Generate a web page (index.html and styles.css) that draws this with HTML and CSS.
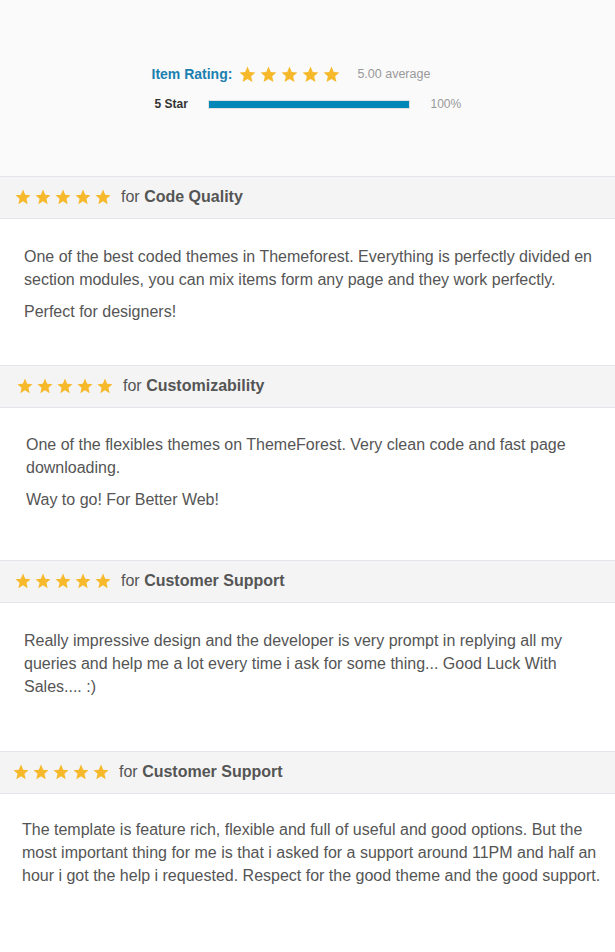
FILE: index.html
```html
<!DOCTYPE html>
<html>
<head>
<meta name="viewport" content="width=device-width, initial-scale=1">
<link rel="stylesheet" href="styles.css">
</head>
<body>

<svg class="defs" width="0" height="0">
  <symbol id="star" viewBox="0 0 24 24">
    <path d="M12 2l2.9 6.9 7.1.6-5.4 4.7 1.6 7.3L12 17.8 5.8 21.5l1.6-7.3L2 9.5l7.1-.6z"/>
  </symbol>
</svg>

<div class="summary">
  <div class="summary-inner">
    <div class="summary-row">
      <span class="summary-label">Item Rating:</span>
      <span class="stars stars-lg">
        <svg><use href="#star"/></svg><svg><use href="#star"/></svg><svg><use href="#star"/></svg><svg><use href="#star"/></svg><svg><use href="#star"/></svg>
      </span>
      <span class="summary-avg">5.00 average</span>
    </div>
    <div class="bar-row">
      <span class="bar-label">5 Star</span>
      <div class="bar"><div class="bar-fill" style="width:100%"></div></div>
      <span class="bar-pct">100%</span>
    </div>
  </div>
</div>

<div class="review shift-0 tail-a">
  <div class="review-head">
    <span class="stars">
      <svg><use href="#star"/></svg><svg><use href="#star"/></svg><svg><use href="#star"/></svg><svg><use href="#star"/></svg><svg><use href="#star"/></svg>
    </span>
    <span class="review-for">for <b>Code Quality</b></span>
  </div>
  <div class="review-body">
    <p>One of the best coded themes in Themeforest. Everything is perfectly divided en section modules, you can mix items form any page and they work perfectly.</p>
    <p>Perfect for designers!</p>
  </div>
</div>

<div class="review shift-2 tail-b">
  <div class="review-head">
    <span class="stars">
      <svg><use href="#star"/></svg><svg><use href="#star"/></svg><svg><use href="#star"/></svg><svg><use href="#star"/></svg><svg><use href="#star"/></svg>
    </span>
    <span class="review-for">for <b>Customizability</b></span>
  </div>
  <div class="review-body">
    <p>One of the flexibles themes on ThemeForest. Very clean code and fast page downloading.</p>
    <p>Way to go! For Better Web!</p>
  </div>
</div>

<div class="review shift-0 tail-c">
  <div class="review-head">
    <span class="stars">
      <svg><use href="#star"/></svg><svg><use href="#star"/></svg><svg><use href="#star"/></svg><svg><use href="#star"/></svg><svg><use href="#star"/></svg>
    </span>
    <span class="review-for">for <b>Customer Support</b></span>
  </div>
  <div class="review-body">
    <p>Really impressive design and the developer is very prompt in replying all my queries and help me a lot every time i ask for some thing... Good Luck With Sales.... :)</p>
  </div>
</div>

<div class="review shift-m2 tail-d">
  <div class="review-head">
    <span class="stars">
      <svg><use href="#star"/></svg><svg><use href="#star"/></svg><svg><use href="#star"/></svg><svg><use href="#star"/></svg><svg><use href="#star"/></svg>
    </span>
    <span class="review-for">for <b>Customer Support</b></span>
  </div>
  <div class="review-body">
    <p>The template is feature rich, flexible and full of useful and good options. But the most important thing for me is that i asked for a support around 11PM and half an hour i got the help i requested. Respect for the good theme and the good support.</p>
  </div>
</div>

</body>
</html>
```

FILE: styles.css
```css
* {
  box-sizing: border-box;
}

body {
  margin: 0;
  background: #fff;
  font-family: "Liberation Sans", Arial, sans-serif;
  color: #555;
}

.defs {
  position: absolute;
}

/* rating summary */
.summary {
  background: #fafafa;
  height: 176px;
  padding-top: 64px;
}

.summary-inner {
  width: 312px;
  margin: 0 auto;
}

.summary-row {
  display: flex;
  align-items: center;
  height: 20px;
}

.summary-label {
  color: #1a80b0;
  font-weight: bold;
  font-size: 14px;
  margin-right: 6px;
}

.summary-avg {
  color: #999;
  font-size: 12.5px;
  margin-left: 16px;
}

.stars {
  display: flex;
  gap: 2px;
}

.stars svg {
  width: 18px;
  height: 18px;
  fill: #f6b92c;
}

.stars-lg svg {
  width: 19px;
  height: 19px;
}

.bar-row {
  display: flex;
  align-items: center;
  height: 14px;
  margin-top: 13px;
  padding-left: 3px;
}

.bar-label {
  width: 53px;
  font-size: 12px;
  font-weight: bold;
  color: #333;
}

.bar {
  width: 202px;
  height: 9px;
  background: #e8e8e8;
  border: 1px solid #e2e2e2;
}

.bar-fill {
  height: 100%;
  background: #0087b8;
}

.bar-pct {
  margin-left: 21px;
  font-size: 12px;
  color: #999;
}

/* reviews */
.review-head {
  display: flex;
  align-items: center;
  height: 43px;
  background: #f4f4f4;
  border-top: 1px solid #e2e6eb;
  border-bottom: 1px solid #e2e6eb;
  padding-left: 14px;
  padding-bottom: 1px;
}

.review-for {
  margin-left: 9px;
  font-size: 16px;
  color: #555;
}

.review-for b {
  color: #555;
}

.review-body {
  padding: 24px 13px 44px 24px;
  font-size: 16px;
  line-height: 23px;
}

.review-body p {
  margin: 0 0 9px;
}

.review-body p:last-child {
  margin-bottom: 0;
}

.shift-0 .review-head { padding-left: 14px; }
.shift-2 .review-head { padding-left: 16px; }
.shift-m2 .review-head { padding-left: 12px; }

.tail-a .review-body { padding: 26px 13px 42px 24px; }
.tail-b .review-body { padding: 25px 13px 49px 26px; }
.tail-c .review-body { padding: 26px 13px 53px 24px; }
.tail-d .review-body { padding: 24px 13px 55px 22px; }
```
